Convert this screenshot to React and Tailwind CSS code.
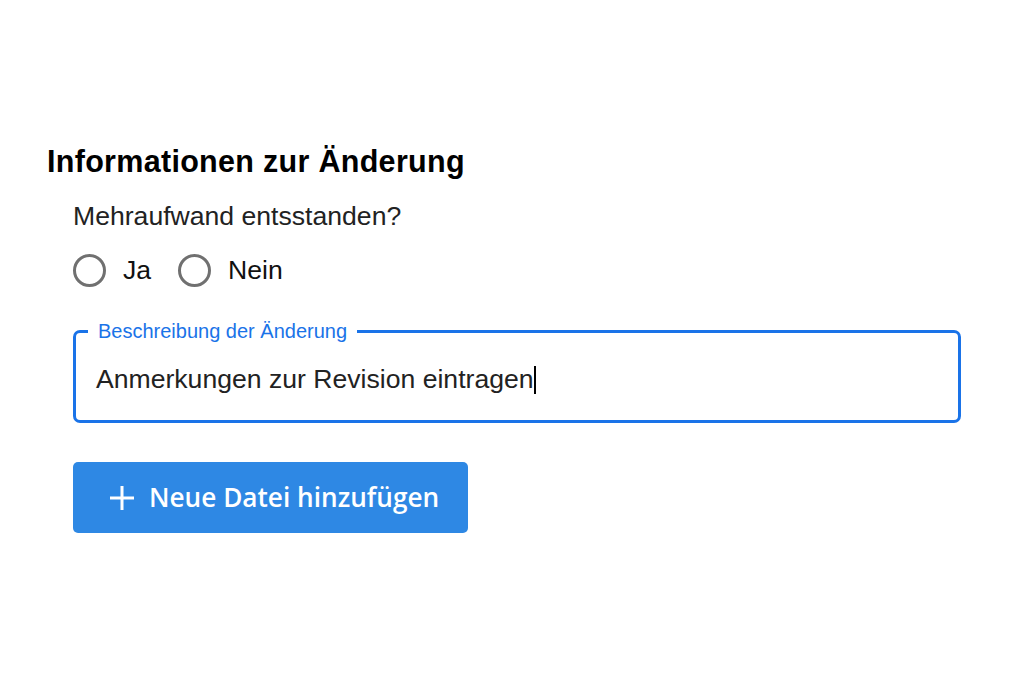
import React from 'react';

function Radio({ label }) {
  return (
    <label className="flex items-center gap-[17px]">
      <span className="w-[33px] h-[33px] rounded-full border-[3px] border-[#707070] bg-white" />
      <span>{label}</span>
    </label>
  );
}

export default function App() {
  return (
    <div className="w-[1024px] h-[683px] bg-white font-['Liberation_Sans',Arial,sans-serif] text-[#1a1a1a]">
      <div className="pl-[47px] pt-[143px]">
        <h2 className="text-[30.5px] leading-[36px] font-bold text-black tracking-[0.3px]">Informationen zur Änderung</h2>

        <div className="pl-[26px] pr-[63px]">
          <p className="mt-[21px] text-[26.6px] leading-[32px] text-[#222]">Mehraufwand entsstanden?</p>

          <div className="mt-[22px] flex items-center gap-[27px] text-[26.6px] leading-[33px] text-[#111]">
            <Radio label="Ja" />
            <Radio label="Nein" />
          </div>

          <fieldset className="mt-[32px] h-[104px] border-[3px] border-[#1a73e8] rounded-[7px] px-[12px] pb-[2px]">
            <legend className="px-[10px] text-[20px] leading-[24px] text-[#1a73e8]">Beschreibung der Änderung</legend>
            <div className="flex items-center h-[64px] pt-[10px] pl-[8px] text-[26.6px] text-[#222]">
              <span>Anmerkungen zur Revision eintragen</span>
              <span className="w-[2px] h-[28px] bg-black" />
            </div>
          </fieldset>

          <button className="mt-[39px] w-[395px] h-[71px] bg-[#2e88e4] rounded-[5px] flex items-center pl-[37px] gap-[15px] text-white font-['Open_Sans',sans-serif] font-semibold text-[26.2px]">
            <svg width="24" height="24" viewBox="0 0 24 24" fill="none" stroke="white" strokeWidth="3" strokeLinecap="square">
              <path d="M12 1v22M1 12h22" />
            </svg>
            <span>Neue Datei hinzufügen</span>
          </button>
        </div>
      </div>
    </div>
  );
}
